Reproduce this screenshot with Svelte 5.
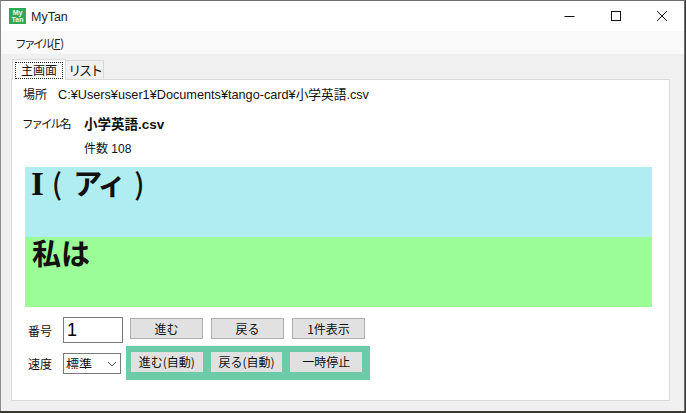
<script>
  let speed = 'normal';
  let num = '1';
</script>

<div class="window">
  <header class="titlebar">
    <div class="logo"><span>My</span><span>Tan</span></div>
    <span class="app-name">MyTan</span>
    <div class="win-btns">
      <svg width="46" height="31" viewBox="0 0 46 31"><path d="M17.5 15.5h10" stroke="#111" fill="none"/></svg>
      <svg width="46" height="31" viewBox="0 0 46 31"><rect x="18.5" y="10.5" width="9" height="9" stroke="#111" fill="none"/></svg>
      <svg width="46" height="31" viewBox="0 0 46 31"><path d="M18 10l10 10M28 10l-10 10" stroke="#111" fill="none"/></svg>
    </div>
  </header>

  <nav class="menubar"><span><span class="kana">ファイル(</span><u>F</u>)</span></nav>

  <main class="body">
    <div class="tabs">
      <div class="tab active"><span class="focus">主画面</span></div>
      <div class="tab"><span class="kana-tab">リスト</span></div>
    </div>

    <section class="panel">
      <div class="row-path">
        <span class="lbl-place">場所</span>
        <span class="path">C:¥Users¥user1¥Documents¥tango-card¥小学英語.csv</span>
      </div>
      <div class="row-file">
        <span class="lbl-file">ファイル名</span>
        <strong>小学英語.csv</strong>
      </div>
      <div class="row-count">件数 108</div>

      <div class="card">
        <div class="word"><span class="latin">I</span><span class="paren open">(</span><span class="reading">アィ</span><span class="paren close">)</span></div>
        <div class="meaning">私は</div>
      </div>

      <div class="row-num">
        <label for="num">番号</label>
        <input id="num" bind:value={num} />
        <div class="btns">
          <button>進む</button>
          <button>戻る</button>
          <button>1件表示</button>
        </div>
      </div>

      <div class="row-speed">
        <label for="speed">速度</label>
        <div class="select-wrap">
          <select id="speed" bind:value={speed}>
            <option value="normal">標準</option>
          </select>
          <svg width="10" height="6" viewBox="0 0 10 6"><path d="M1 1l4 4 4-4" stroke="#555" fill="none"/></svg>
        </div>
        <div class="auto">
          <button>進む(自動)</button>
          <button>戻る(自動)</button>
          <button>一時停止</button>
        </div>
      </div>
    </section>
  </main>
</div>

<style>
  :global(body) {
    margin: 0;
    background: #3a3a32;
    font-family: "Noto Sans CJK JP", "Liberation Sans", sans-serif;
    font-size: 12px;
    color: #111;
  }
  .window {
    width: 685px;
    height: 411px;
    box-sizing: border-box;
    border: 1px solid #6e6e6e;
    border-bottom: none;
    border-left-color: #8a8a8a;
    display: flex;
    flex-direction: column;
    background: #f0f0f0;
    overflow: hidden;
  }
  .titlebar {
    height: 30px;
    flex: none;
    background: #fff;
    display: flex;
    align-items: center;
    padding-left: 8px;
  }
  .logo {
    width: 17px;
    height: 16px;
    background: #2eaa57;
    color: #e8f8ee;
    font: bold 7px/7.5px "Liberation Sans", sans-serif;
    display: flex;
    flex-direction: column;
    align-items: center;
    justify-content: center;
  }
  .app-name {
    margin-left: 5px;
    padding-top: 1px;
    font: 12.5px "Liberation Sans", sans-serif;
    color: #222;
  }
  .win-btns { margin-left: auto; display: flex; margin-right: -1px; }
  .win-btns svg { display: block; }
  .menubar {
    height: 23px;
    flex: none;
    background: #f9f9f9;
    display: flex;
    align-items: center;
    padding-left: 14px;
    box-sizing: border-box;
    font-size: 11.5px;
    color: #222;
  }
  .kana { letter-spacing: -2.6px; margin-right: 2px; }
  .body {
    flex: 1;
    padding: 5px 14px 10px 10px;
    display: flex;
    flex-direction: column;
    min-height: 0;
  }
  .tabs { display: flex; height: 20px; flex: none; padding-left: 1px; align-items: flex-end; position: relative; z-index: 1; }
  .tab {
    box-sizing: border-box;
    height: 19px;
    width: 38px;
    background: #f0f0f0;
    border: 1px solid #d9d9d9;
    border-left: none;
    border-bottom: none;
    text-align: center;
    font-size: 12px;
    line-height: 17px;
  }
  .kana-tab { letter-spacing: -2.2px; font-size: 13px; }
  .tab.active {
    width: 54px;
    height: 21px;
    background: #fff;
    padding: 2px;
    margin-bottom: -1px;
    border-left: 1px solid #d9d9d9;
  }
  .focus {
    display: block;
    border: 1px dotted #222;
    height: 15px;
    line-height: 14px;
  }
  .panel {
    flex: 1;
    background: #fff;
    border: 1px solid #d9d9d9;
    padding: 0 17px 0 0;
    display: flex;
    flex-direction: column;
    min-height: 0;
  }
  .row-path { display: flex; align-items: center; height: 18px; margin-top: 4px; padding-left: 11px; }
  .lbl-place { width: 35px; font-size: 12px; }
  .path { font: 12.7px "Liberation Sans", "Noto Sans CJK JP", sans-serif; }
  .row-file { display: flex; align-items: center; height: 18px; margin-top: 12px; padding-left: 10px; }
  .lbl-file { width: 62px; font-size: 11.5px; letter-spacing: -2px; }
  .row-file strong { font: bold 13.5px "Liberation Sans", "Noto Sans CJK JP", sans-serif; }
  .row-count { height: 18px; margin-top: 8px; padding-left: 72px; font: 12px/18px "Liberation Sans", "Noto Sans CJK JP", sans-serif; }
  .card { margin: 9px 0 0 13px; }
  .word, .meaning {
    height: 70px;
    box-sizing: border-box;
    font-family: "Noto Sans CJK JP", sans-serif;
    font-size: 29px;
    font-weight: bold;
    line-height: 31px;
    padding-left: 6px;
    white-space: pre;
  }
  .latin { font-family: "Liberation Serif", serif; font-size: 33px; }
  .paren { font-weight: 500; }
  .open { margin: 0 11px 0 8px; }
  .close { margin-left: 13px; }
  .reading { letter-spacing: -5px; }
  .word { background: #b0edf0; }
  .meaning { background: #9afd97; padding-left: 7px; }
  .row-num { display: flex; align-items: center; margin: 10px 0 0 13px; height: 26px; }
  .row-speed { display: flex; align-items: center; margin: 3px 0 0 13px; height: 34px; }
  label { width: 38px; padding-left: 3px; box-sizing: border-box; font-size: 12px; }
  #num {
    box-sizing: border-box;
    width: 60px;
    height: 26px;
    border: 1px solid #7a7a7a;
    padding: 0 3px;
    font: 18px "Liberation Sans", sans-serif;
    color: #000;
    outline: none;
  }
  .btns { display: flex; gap: 8px; margin-left: 7px; align-self: flex-start; margin-top: 1px; }
  button {
    box-sizing: border-box;
    background: #e1e1e1;
    border: 1px solid #adadad;
    padding: 0;
    font-family: "Noto Sans CJK JP", sans-serif;
    font-size: 12px;
    color: #111;
    width: 73px;
    height: 21px;
    line-height: 18px;
  }
  .select-wrap { position: relative; width: 58px; height: 21px; }
  select {
    appearance: none;
    box-sizing: border-box;
    width: 100%;
    height: 100%;
    border: 1px solid #7a7a7a;
    border-radius: 0;
    background: #fff;
    padding: 0 0 4px 2px;
    font-family: "Noto Sans CJK JP", sans-serif;
    font-size: 13px;
    color: #111;
  }
  .select-wrap svg { position: absolute; right: 4px; top: 8px; pointer-events: none; }
  .auto {
    box-sizing: border-box;
    width: 244px;
    height: 34px;
    margin-left: 5px;
    background: #6ecba9;
    padding: 6px 8px 0 5px;
    display: flex;
    gap: 8px;
  }
  .auto button { border: none; width: 72px; height: 20px; background: #e1e1e1; }
</style>
